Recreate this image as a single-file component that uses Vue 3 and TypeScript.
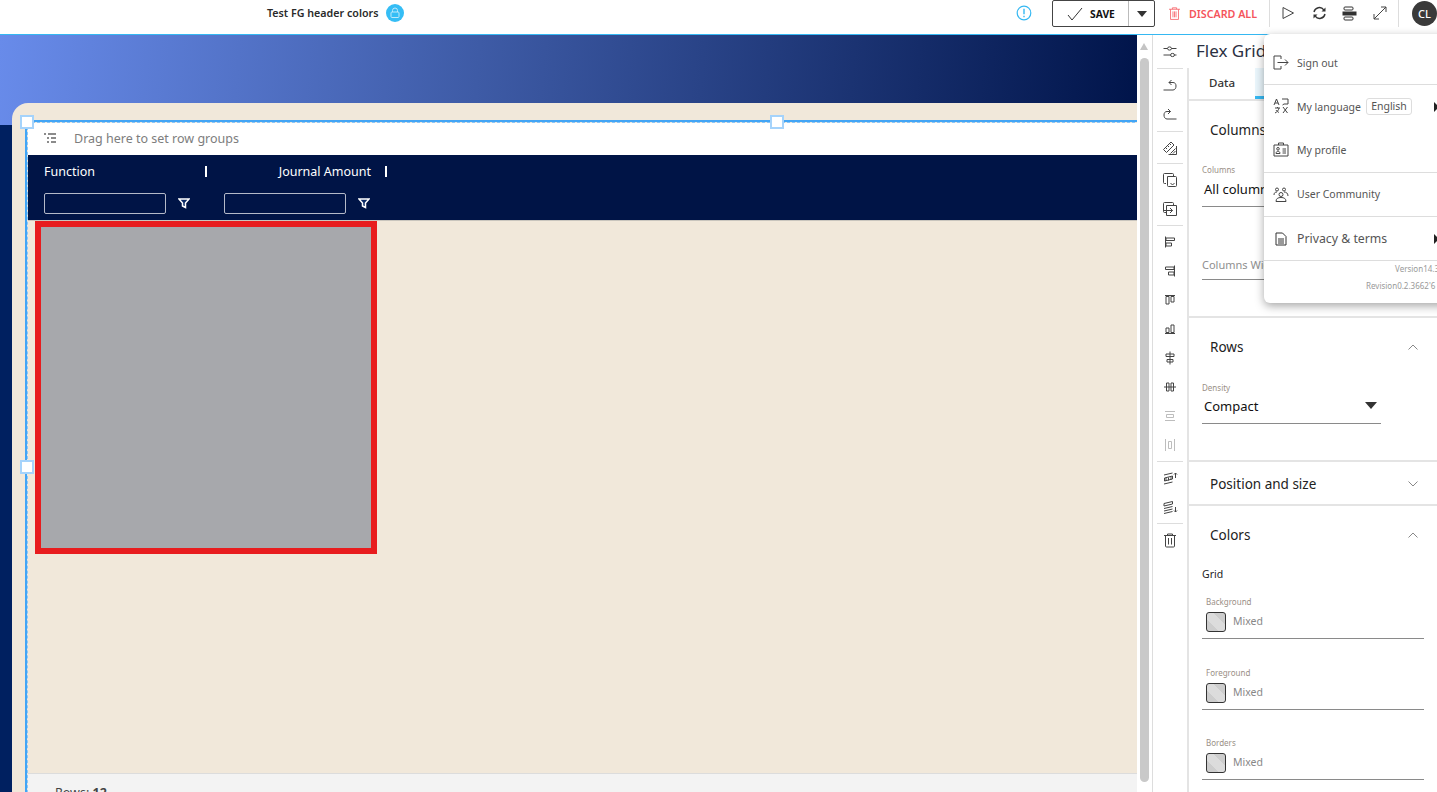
<script setup lang="ts">
interface ToolIcon { id: string; faded?: boolean; sepAfter?: 'normal' | 'wide' | 'tight' }
const tools: ToolIcon[] = [
  { id: 'sliders', sepAfter: 'wide' },
  { id: 'undo' },
  { id: 'redo', sepAfter: 'normal' },
  { id: 'ruler', sepAfter: 'tight' },
  { id: 'paste' },
  { id: 'copyto', sepAfter: 'normal' },
  { id: 'aleft' },
  { id: 'aright' },
  { id: 'atop' },
  { id: 'abottom' },
  { id: 'acenter' },
  { id: 'amiddle' },
  { id: 'dvert', faded: true },
  { id: 'dhorz', faded: true, sepAfter: 'normal' },
  { id: 'front' },
  { id: 'back', sepAfter: 'normal' },
  { id: 'trash' }
]
const paths: Record<string, string> = {
  sliders: 'M1.500 4.500h4M9.500 4.500h5M1.500 11h7M12.500 11h2M5.500 4.500a2 1.600 0 1 0 4 0a2 1.600 0 1 0-4 0M8.500 11a2 1.600 0 1 0 4 0a2 1.600 0 1 0-4 0',
  undo: 'M9.500 2 7 4.500 9.500 7M7 4.500h4c2 0 3 1.400 3 3.500s-1 4-3 4H1.500',
  redo: 'M6 2 8.500 4.500 6 7M8.500 4.500H5C3 4.500 2 5.900 2 8s1 4 3 4h9.500',
  ruler: 'M1.500 9.500 9 2l3 3-7.500 7.500ZM3.500 7.500l1.500 1.500M5.500 5.500 7 7M7.500 3.500 9 5M14.500 6v8.500H6.500M13.500 8.500l-5 5M13.500 11l-2.500 2.500',
  paste: 'M4 11.500H2.500a1 1 0 0 1-1-1v-8a1 1 0 0 1 1-1h8a1 1 0 0 1 1 1V4M5.500 4.500h8a1 1 0 0 1 1 1v8a1 1 0 0 1-1 1h-7a1 1 0 0 1-1-1ZM8.500 11l2 2 2-2',
  copyto: 'M4 11.500H2.500a1 1 0 0 1-1-1v-8a1 1 0 0 1 1-1h8a1 1 0 0 1 1 1V4.500M4.500 4.500h10v10h-10ZM1.500 9.500h9M8 7l2.500 2.500L8 12',
  aleft: 'M3.500 2.500v11M4 4h8.500v2.500H4ZM4 9h5.500v3H4Z',
  aright: 'M12.500 2.500v11M12 4H3.500v2.500H12ZM12 9H6.500v3H12Z',
  atop: 'M3 3.500h10M4 4.500v7.500h3V4.500ZM9 4.500V10h3V4.500Z',
  abottom: 'M3 12.500h10M4 11.500V7h3v4.500ZM9 11.500V4h3v7.500Z',
  acenter: 'M8 1.500v13M4 4h8v2.500H4ZM5 9.500h6V12H5Z',
  amiddle: 'M2 8h12M4.500 4v8h2.500V4ZM9 4v8h2.500V4Z',
  dvert: 'M3 3.500h10M3 12.500h10M4.500 6.500h7v3h-7Z',
  dhorz: 'M3.500 2v12M12.500 2v12M6.500 4.500v7h3v-7Z',
  front: 'M2 5 10.500 3M2.500 8 10.500 6v3l-8 2ZM2 14l8.500-2M13.500 8V3M12 4.500 13.500 3 15 4.500M4 8v3M6.500 7.500v3M9 6.500v3',
  back: 'M2 4.500 10.500 2.500v2.500L2 7ZM2 9.500l8.500-2M2 14.500l8.500-2M2 12l8.500-2M13.500 8v5M12 11.500l1.500 1.500 1.500-1.500',
  trash: 'M2 3.500h12M5.500 3.500V2h5v1.500M3.500 3.500V14a1 1 0 0 0 1 1h7a1 1 0 0 0 1-1V3.500M6.500 6v6.500M9.500 6v6.500'
}
</script>

<template>
  <div class="app">
    <header class="topbar">
      <span class="doc-title">Test FG header colors</span>
      <span class="lock">
        <svg width="12" height="12" viewBox="0 0 12 12" fill="none" stroke="#bfe9fb" stroke-width="1">
          <rect x="2" y="5" width="8" height="5.500" rx="1" />
          <path d="M3.500 5V3.500a2.500 2.500 0 0 1 5 0V5" />
        </svg>
      </span>
      <div class="actions">
        <svg class="info" width="16" height="16" viewBox="0 0 16 16" fill="none" stroke="#35b8f2" stroke-width="1.200">
          <circle cx="8" cy="8" r="6.800" />
          <path d="M8 3.800v5.400M8 10.800v1.400" stroke-width="1.400" />
        </svg>
        <div class="save">
          <div class="save-main">
            <svg width="16" height="14" viewBox="0 0 16 14" fill="none" stroke="#333" stroke-width="1">
              <path d="M1 8l4 5L15 1" />
            </svg>
            <span>SAVE</span>
          </div>
          <div class="save-more"><i class="caret"></i></div>
        </div>
        <div class="discard">
          <svg width="13" height="15" viewBox="0 0 13 15" fill="none" stroke="#f7656b" stroke-width="1">
            <path d="M0 2.500h13M4 2.500V.8h5v1.700M1.800 2.500V14.500h9.400V2.500M4.700 5v7M6.500 5v7M8.300 5v7" />
          </svg>
          <span>DISCARD ALL</span>
        </div>
        <i class="vline first"></i>
        <svg class="tb play" width="14" height="14" viewBox="0 0 14 14" fill="none" stroke="#444" stroke-width="1">
          <path d="M2 1.500v11L12.500 7Z" />
        </svg>
        <svg class="tb sync" width="15" height="14" viewBox="0 0 15 14" fill="none" stroke="#333" stroke-width="1.400">
          <path d="M2 6a5.500 5.500 0 0 1 9.800-2.200M13 8a5.500 5.500 0 0 1-9.800 2.200" />
          <path d="M13.500 1.500v4h-4ZM1.500 12.500v-4h4Z" fill="#333" stroke="none" />
        </svg>
        <svg class="tb layout" width="15" height="15" viewBox="0 0 15 15" fill="none" stroke="#333" stroke-width="1">
          <rect x="2" y="1" width="9" height="3" rx="1" />
          <rect x="2" y="11" width="9" height="3" rx="1" />
          <rect x="1" y="6" width="13" height="3" fill="#333" />
        </svg>
        <svg class="tb expand" width="14" height="14" viewBox="0 0 14 14" fill="none" stroke="#444" stroke-width="1">
          <path d="M1 13 13 1M8 1h5v5M1 8v5h5" />
        </svg>
        <i class="vline second"></i>
        <span class="avatar">CL</span>
      </div>
    </header>

    <main class="main">
      <section class="canvas">
        <div class="page">
          <div class="grid">
            <i class="handle h-tl"></i>
            <i class="handle h-tc"></i>
            <i class="handle h-ml"></i>
            <div class="grid-inner">
              <div class="groupbar">
                <svg width="13" height="11" viewBox="0 0 13 11" fill="none" stroke="#666" stroke-width="1.300">
                  <path d="M0 1h2M4 1h8M3 5h2M7 5h5M3 9h2M7 9h5" />
                </svg>
                <span>Drag here to set row groups</span>
              </div>
              <div class="grid-head">
                <div class="col">
                  <div class="col-title">Function</div>
                  <div class="col-filter">
                    <i class="filter-input"></i>
                    <svg width="12" height="11" viewBox="0 0 12 11" fill="#0b2a66" stroke="#fff" stroke-width="1.500">
                      <path d="M1 1h10L7.500 5v4.500l-3-1.500V5Z" />
                    </svg>
                  </div>
                  <i class="col-sep"></i>
                </div>
                <div class="col">
                  <div class="col-title right">Journal Amount</div>
                  <div class="col-filter">
                    <i class="filter-input"></i>
                    <svg width="12" height="11" viewBox="0 0 12 11" fill="#0b2a66" stroke="#fff" stroke-width="1.500">
                      <path d="M1 1h10L7.500 5v4.500l-3-1.500V5Z" />
                    </svg>
                  </div>
                  <i class="col-sep"></i>
                </div>
              </div>
              <div class="grid-body">
                <div class="redbox"></div>
              </div>
              <div class="grid-foot">Rows: <b>12</b></div>
            </div>
          </div>
        </div>
      </section>

      <div class="vscroll">
        <i class="sc-up"></i>
        <i class="sc-thumb"></i>
      </div>

      <nav class="toolbar">
        <template v-for="t in tools" :key="t.id">
          <div class="tool" :class="{ faded: t.faded }">
            <svg width="16" height="16" viewBox="0 0 16 16" fill="none" stroke="currentColor" stroke-width="1">
              <path :d="paths[t.id]" />
            </svg>
          </div>
          <div v-if="t.sepAfter" class="tsep" :class="t.sepAfter"><i></i></div>
        </template>
      </nav>

      <aside class="panel">
        <div class="panel-title">Flex Grid</div>
        <div class="panel-body">
          <div class="tabs">
            <span class="tab">Data</span>
            <span class="tab active"></span>
          </div>

          <div class="sec sec-columns">
            <h3>Columns</h3>
            <div class="field f-columns">
              <label>Columns</label>
              <div class="value">All columns</div>
            </div>
            <div class="field f-width">
              <div class="placeholder">Columns Width</div>
            </div>
          </div>

          <div class="sec sec-rows">
            <div class="sec-head">
              <h3>Rows</h3>
              <svg class="chev" width="10" height="6" viewBox="0 0 10 6" fill="none" stroke="#888"><path d="M.5 5.500 5 1l4.500 4.500" /></svg>
            </div>
            <div class="field f-density">
              <label>Density</label>
              <div class="value">Compact<i class="caret big"></i></div>
            </div>
          </div>

          <div class="sec sec-pos">
            <div class="sec-head">
              <h3>Position and size</h3>
              <svg class="chev" width="10" height="6" viewBox="0 0 10 6" fill="none" stroke="#888"><path d="M.5.500 5 5 9.500.500" /></svg>
            </div>
          </div>

          <div class="sec-colors">
            <div class="sec-head">
              <h3>Colors</h3>
              <svg class="chev" width="10" height="6" viewBox="0 0 10 6" fill="none" stroke="#888"><path d="M.5 5.500 5 1l4.500 4.500" /></svg>
            </div>
            <div class="grid-label">Grid</div>
            <div v-for="c in ['Background', 'Foreground', 'Borders']" :key="c" class="color">
              <label>{{ c }}</label>
              <div class="color-row">
                <i class="swatch"></i>
                <span>Mixed</span>
              </div>
            </div>
          </div>
        </div>
      </aside>
    </main>

    <div class="menu">
      <div class="mi mi-1">
        <svg width="16" height="15" viewBox="0 0 16 15" fill="none" stroke="#444" stroke-width="1">
          <path d="M8 1H1v13h7M8 1v3M8 11v3M4.500 7.500H15M12 4.500l3 3-3 3" />
        </svg>
        <span>Sign out</span>
      </div>
      <div class="mi mi-2">
        <svg width="16" height="16" viewBox="0 0 16 16" fill="none" stroke="#444" stroke-width="1">
          <path d="M1 7l2.500-6L6 7M2 5h3M9 1h6v5h-4l-1.500 1M2 10h5M4.500 9v1M6 10c-.500 2.500-2 4-4 5M3 12c.500 1 2 2 3 2.500M10 9l4.500 6M14.500 9 10 15" />
        </svg>
        <span>My language</span>
        <em class="lang">English</em>
        <i class="tri"></i>
      </div>
      <div class="mi mi-3">
        <svg width="16" height="15" viewBox="0 0 16 15" fill="none" stroke="#444" stroke-width="1">
          <path d="M1 3h14v11H1ZM5.500 3V1h5v2M9.500 7H13M9.500 9H13M9.500 11H13M3 11.500c0-3 4-3 4 0ZM5 5.500a1.300 1.300 0 1 0 0 2.600a1.300 1.300 0 0 0 0-2.600Z" />
        </svg>
        <span>My profile</span>
      </div>
      <div class="mi mi-4">
        <svg width="16" height="15" viewBox="0 0 16 15" fill="none" stroke="#444" stroke-width="1">
          <path d="M4 1a1.500 1.500 0 1 0 0 3a1.500 1.500 0 0 0 0-3ZM11 1a1.500 1.500 0 1 0 0 3a1.500 1.500 0 0 0 0-3ZM8 5.500a2 2 0 1 0 0 4a2 2 0 0 0 0-4ZM1 8c0-2 1-3 3-3M15 9c0-3-2-4-4-4M3 14.500c0-3 2-4 5-4s5 1 5 4Z" />
        </svg>
        <span>User Community</span>
      </div>
      <div class="mi mi-5">
        <svg width="12" height="14" viewBox="0 0 12 14" fill="none" stroke="#333" stroke-width="1">
          <path d="M1 1h6.500L11 4.500V13H1ZM3 7h6M3 9h6M3 11h6" />
        </svg>
        <span>Privacy &amp; terms</span>
        <i class="tri"></i>
      </div>
      <div class="ver v1">Version14.3</div>
      <div class="ver v2">Revision0.2.3662'6</div>
    </div>
  </div>
</template>

<style>
html, body { margin: 0; background: #fff; }
</style>

<style scoped>
.app {
  position: relative;
  width: 1437px;
  height: 792px;
  overflow: hidden;
  display: flex;
  flex-direction: column;
  font-family: "Noto Sans", "Open Sans", sans-serif;
  color: #222;
  background: #fff;
}
i, em { display: block; font-style: normal; }
.topbar {
  height: 34px;
  flex: none;
  box-sizing: content-box;
  border-bottom: 1px solid #35b8f2;
  display: flex;
  align-items: flex-start;
  padding-left: 267px;
}
.doc-title { font-size: 10.700px; font-weight: 600; line-height: 26px; color: #2a2a2a; width: 119px; white-space: nowrap; }
.lock {
  width: 18px; height: 18px; margin-top: 4px; border-radius: 50%; background: #35bdf5;
  display: flex; align-items: center; justify-content: center;
}
.actions { margin-left: auto; display: flex; align-items: flex-start; height: 27px; width: 421px; flex: none; }
.info { margin-top: 5px; flex: none; }
.save {
  margin-left: 20px; width: 103px; height: 27px; box-sizing: border-box; border: 1px solid #444;
  border-radius: 2px; display: flex;
}
.save-main { width: 76px; display: flex; align-items: center; padding-left: 14px; gap: 7px; box-sizing: border-box; font-size: 10.300px; font-weight: 700; color: #111; border-right: 1px solid #bbb; }
.save-more { flex: 1; display: flex; align-items: center; justify-content: center; }
.caret { width: 0; height: 0; border-left: 5px solid transparent; border-right: 5px solid transparent; border-top: 6px solid #333; }
.discard { margin-left: 14px; display: flex; align-items: center; height: 27px; gap: 9px; font-size: 10.700px; font-weight: 600; color: #f5545b; white-space: nowrap; width: 88px; }
.vline { width: 1px; height: 27px; background: #ddd; flex: none; }
.vline.first { margin-left: 12px; }
.vline.second { margin-left: 11px; }
.tb { flex: none; margin-top: 6px; }
.tb.play { margin-left: 11px; }
.tb.sync { margin-left: 17px; }
.tb.layout { margin-left: 15px; }
.tb.expand { margin-left: 16px; }
.avatar {
  margin: 1px 0 0 13px; width: 25px; height: 25px; border-radius: 50%; background: #3a3a3a; color: #fff;
  font-size: 11px; font-weight: 500; display: flex; align-items: center; justify-content: center; flex: none;
}

.main { flex: 1; display: flex; min-height: 0; }
.canvas {
  width: 1137px; flex: none; overflow: hidden; display: flex; flex-direction: column;
  background: linear-gradient(95deg, #688bea 0%, #3e5ba6 42%, #00144a 100%) 0 0 / 100% 90px no-repeat, #002060;
}
.page {
  margin: 68px 0 0 12px; flex: 1; min-height: 0; background: #f1e8da; border-top-left-radius: 16px;
  padding: 17px 0 0 13px;
}
.grid {
  position: relative; width: 1500px; height: 693px; box-sizing: border-box;
  border-left: 2px solid #42a5f5; border-top: 2px solid #42a5f5;
}
.grid-inner {
  height: 100%; display: flex; flex-direction: column; box-sizing: border-box;
  border-left: 1px dashed #8cc6f7; border-top: 1px dashed #8cc6f7;
}
.handle { position: absolute; width: 10px; height: 10px; background: #fff; border: 2px solid #a5d3fb; z-index: 2; }
.h-tl { left: -7px; top: -7px; }
.h-tc { left: 743px; top: -7px; }
.h-ml { left: -7px; top: 338px; }
.groupbar {
  height: 32px; flex: none; box-sizing: border-box; padding: 0 0 2px 16px; background: #fff; display: flex; align-items: center; gap: 17px;
  font-size: 12.500px; color: #7d7d7d;
}
.grid-head { height: 65px; flex: none; background: #001446; display: flex; color: #fff; }
.col { position: relative; width: 180px; flex: none; box-sizing: border-box; padding-left: 16px; }
.col-title { height: 33px; line-height: 33px; font-size: 12.500px; }
.col-title.right { text-align: right; padding-right: 17px; }
.col-filter { display: flex; align-items: center; padding-top: 5px; gap: 12px; }
.filter-input { width: 122px; height: 21px; box-sizing: border-box; border: 1px solid #b4b9c8; border-radius: 2px; }
.col-sep { position: absolute; right: 1px; top: 11px; width: 2px; height: 11px; background: #fff; }
.grid-body { flex: 1; min-height: 0; border-top: 1px solid #c9c5bd; padding: 0 0 0 7px; }
.redbox { width: 342px; height: 333px; box-sizing: border-box; border: 6px solid #e81c1e; background: #a7a8ac; }
.grid-foot {
  height: 40px; flex: none; box-sizing: border-box; border-top: 1px solid #dcdcdc; background: #f3f3f3;
  padding: 11px 0 0 27px; font-size: 12.500px; color: #444; line-height: 16px;
}

.vscroll { width: 15px; flex: none; background: #fff; position: relative; }
.sc-up {
  position: absolute; left: 3px; top: 8px; width: 0; height: 0;
  border-left: 4px solid transparent; border-right: 4px solid transparent; border-bottom: 7px solid #c4c4c4;
}
.sc-thumb { position: absolute; left: 3px; top: 23px; width: 9px; height: 724px; background: #c9c9c9; border-radius: 5px; }

.toolbar {
  width: 34px; flex: none; border-left: 1px solid #ddd; padding-top: 2px; background: #fff; color: #444;
}
.tool { height: 29px; display: flex; align-items: center; justify-content: center; }
.tool.faded { color: #bdbdbd; }
.tsep { height: 4px; display: flex; align-items: center; justify-content: center; }
.tsep.wide { height: 5px; }
.tsep.tight { height: 3px; }
.tsep i { width: 26px; height: 1px; background: #ddd; }

.panel { flex: 1; min-width: 0; display: flex; flex-direction: column; overflow: hidden; }
.panel-title { height: 33px; flex: none; padding-left: 9px; font-size: 17px; line-height: 31px; color: #2b3042; white-space: nowrap; }
.panel-body { flex: 1; min-height: 0; border-left: 2px solid #e4e4e4; }
.tabs { height: 33px; box-sizing: border-box; border-bottom: 2px solid #e4e4e4; display: flex; }
.tab { font-size: 11.500px; font-weight: 500; line-height: 30px; padding-left: 20px; width: 46px; color: #333; }
.tab.active { background: #eaf6fc; border-bottom: 3px solid #35b8f2; height: 31px; box-sizing: border-box; width: 80px; padding: 0; }
h3 { margin: 0; font-size: 13.500px; font-weight: 400; color: #222; line-height: 18px; }
.sec { border-bottom: 2px solid #e4e4e4; box-sizing: border-box; padding-left: 21px; }
.sec-columns { height: 217px; padding-top: 20px; }
.field { position: relative; margin-left: -8px; border-bottom: 1px solid #8a8a8a; box-sizing: border-box; }
label { display: block; font-size: 8px; line-height: 10px; color: #9a8f86; }
.value { font-size: 13px; line-height: 18px; color: #111; padding: 4.500px 0 0 2px; display: flex; align-items: center; justify-content: space-between; white-space: nowrap; }
.f-columns { margin-top: 26px; width: 220px; height: 42px; }
.f-width { margin-top: 48px; width: 220px; height: 25px; }
.placeholder { font-size: 11px; color: #8f8f8f; line-height: 16px; padding-top: 2px; }
.sec-head { display: flex; align-items: center; justify-content: space-between; padding-right: 19px; }
.sec-rows { height: 144px; padding-top: 20px; }
.f-density { margin-top: 27px; width: 179px; height: 41px; }
.f-density .value { padding-top: 3.500px; }
.caret.big { margin-right: 4px; border-left-width: 6px; border-right-width: 6px; border-top-width: 7px; }
.sec-pos { height: 44px; padding-top: 13px; }
.sec-colors { padding: 20px 0 0 13px; }
.sec-colors .sec-head { padding-left: 8px; }
.grid-label { margin-top: 23px; font-size: 10.500px; line-height: 14px; color: #222; }
.color { width: 222px; box-sizing: border-box; border-bottom: 1px solid #8a8a8a; height: 58px; padding: 16px 0 0 4px; margin-bottom: 13px; }
.color:last-child { margin-top: -1px; }
.color label { font-size: 8px; line-height: 10px; }
.color-row { display: flex; align-items: center; gap: 7px; margin-top: 5px; font-size: 10.500px; color: #888; }
.color-row span { padding-bottom: 2px; }
.swatch {
  width: 20px; height: 20px; box-sizing: border-box; border: 1px solid #333; border-radius: 3px;
  background: linear-gradient(45deg, #cdcdcd 32%, #dcdcdc 32%, #dcdcdc 68%, #cdcdcd 68%);
}

.menu {
  position: absolute; left: 1264px; top: 34px; width: 190px; height: 269px; background: #fff;
  border-radius: 6px; box-shadow: 0 3px 10px rgba(0, 0, 0, .35); display: flex; flex-direction: column;
  font-size: 10.500px; color: #555; z-index: 5;
}
.mi { display: flex; align-items: center; padding-left: 9px; box-sizing: border-box; position: relative; }
.mi > span { position: absolute; left: 33px; white-space: nowrap; }
.mi-1 { height: 51px; border-bottom: 1px solid #ddd; padding-top: 6px; }
.mi-1 > span { top: 22px; }
.mi-2 { height: 44px; padding-bottom: 2px; }
.mi-2 > span { top: 15px; }
.mi-3 { height: 44px; border-bottom: 1px solid #ddd; padding-bottom: 2px; }
.mi-4 { height: 44px; border-bottom: 1px solid #ddd; padding-bottom: 1px; }
.mi-5 { height: 44px; border-bottom: 1px solid #ddd; font-size: 12.300px; padding-left: 11px; }
.lang {
  position: absolute; left: 102px; top: 13px; height: 17px; width: 46px; box-sizing: border-box; border: 1px solid #ddd; border-radius: 3px;
  font-size: 10.500px; line-height: 15px; text-align: center; color: #555;
}
.tri {
  position: absolute; left: 170px; top: 50%; margin-top: -5px; width: 0; height: 0;
  border-top: 5px solid transparent; border-bottom: 5px solid transparent; border-left: 5px solid #222;
}
.ver { font-size: 8px; color: #999; position: absolute; white-space: nowrap; }
.v1 { left: 131px; top: 229px; }
.v2 { left: 102px; top: 246px; }
</style>
